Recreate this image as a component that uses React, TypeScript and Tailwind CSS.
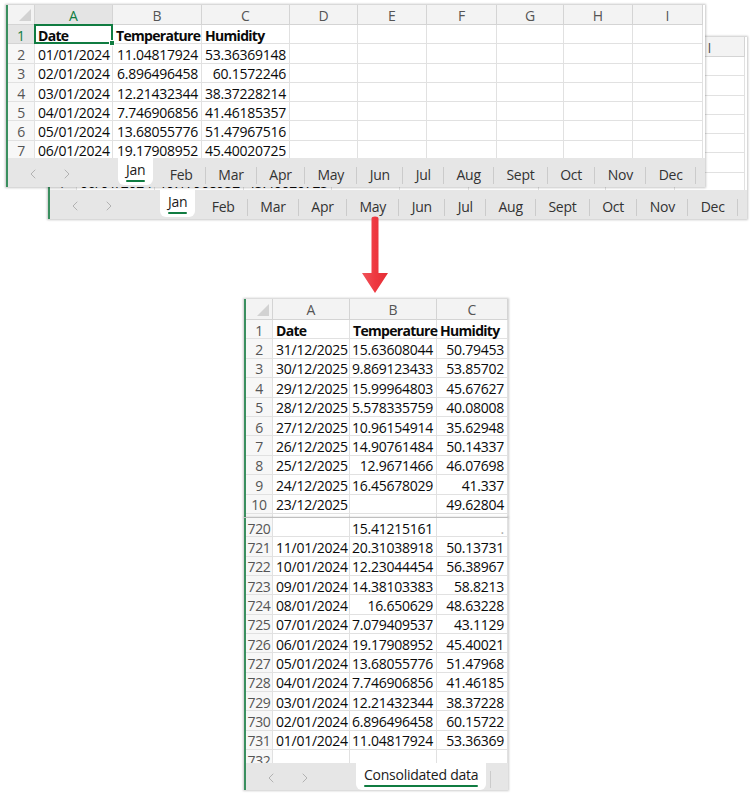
import React from "react";
import { ChevronLeft, ChevronRight } from "lucide-react";

type Row = { num: string; cells: string[]; bold?: boolean };

const monthRows: Row[] = [
  { num: "1", cells: ["Date", "Temperature", "Humidity"], bold: true },
  { num: "2", cells: ["01/01/2024", "11.04817924", "53.36369148"] },
  { num: "3", cells: ["02/01/2024", "6.896496458", "60.1572246"] },
  { num: "4", cells: ["03/01/2024", "12.21432344", "38.37228214"] },
  { num: "5", cells: ["04/01/2024", "7.746906856", "41.46185357"] },
  { num: "6", cells: ["05/01/2024", "13.68055776", "51.47967516"] },
  { num: "7", cells: ["06/01/2024", "19.17908952", "45.40020725"] },
  { num: "8", cells: ["", "", ""] },
];

const consTop: Row[] = [
  { num: "1", cells: ["Date", "Temperature", "Humidity"], bold: true },
  { num: "2", cells: ["31/12/2025", "15.63608044", "50.79453"] },
  { num: "3", cells: ["30/12/2025", "9.869123433", "53.85702"] },
  { num: "4", cells: ["29/12/2025", "15.99964803", "45.67627"] },
  { num: "5", cells: ["28/12/2025", "5.578335759", "40.08008"] },
  { num: "6", cells: ["27/12/2025", "10.96154914", "35.62948"] },
  { num: "7", cells: ["26/12/2025", "14.90761484", "50.14337"] },
  { num: "8", cells: ["25/12/2025", "12.9671466", "46.07698"] },
  { num: "9", cells: ["24/12/2025", "16.45678029", "41.337"] },
  { num: "10", cells: ["23/12/2025", "", "49.62804"] },
  { num: "11", cells: ["", "", ""] },
];

const consBottom: Row[] = [
  { num: "720", cells: ["", "15.41215161", "."] },
  { num: "721", cells: ["11/01/2024", "20.31038918", "50.13731"] },
  { num: "722", cells: ["10/01/2024", "12.23044454", "56.38967"] },
  { num: "723", cells: ["09/01/2024", "14.38103383", "58.8213"] },
  { num: "724", cells: ["08/01/2024", "16.650629", "48.63228"] },
  { num: "725", cells: ["07/01/2024", "7.079409537", "43.1129"] },
  { num: "726", cells: ["06/01/2024", "19.17908952", "45.40021"] },
  { num: "727", cells: ["05/01/2024", "13.68055776", "51.47968"] },
  { num: "728", cells: ["04/01/2024", "7.746906856", "41.46185"] },
  { num: "729", cells: ["03/01/2024", "12.21432344", "38.37228"] },
  { num: "730", cells: ["02/01/2024", "6.896496458", "60.15722"] },
  { num: "731", cells: ["01/01/2024", "11.04817924", "53.36369"] },
  { num: "732", cells: ["", "", ""] },
];

const months = ["Jan", "Feb", "Mar", "Apr", "May", "Jun", "Jul", "Aug", "Sept", "Oct", "Nov", "Dec"];

function Grid({
  gridClass,
  letters,
  rows,
  header,
  selected,
}: {
  gridClass: string;
  letters: string[];
  rows: Row[];
  header: boolean;
  selected?: boolean;
}) {
  return (
    <div className={gridClass}>
      {header && (
        <>
          <div className="relative border-b border-r border-[#d4d4d4] bg-[#f3f3f3]">
            <svg className="absolute bottom-[3px] right-[3px]" width="12" height="12" viewBox="0 0 12 12">
              <path d="M12 0V12H0Z" fill="#d2d2d2" />
            </svg>
          </div>
          {letters.map((l, i) => (
            <div
              key={l}
              className={
                selected && i === 0
                  ? "flex items-center justify-center border-b border-r border-[#d4d4d4] bg-[#e4e4e4] pt-[1px] text-[#107c41]"
                  : "flex items-center justify-center border-b border-r border-[#d4d4d4] bg-[#f3f3f3] pt-[1px] text-[#555]"
              }
            >
              {l}
            </div>
          ))}
        </>
      )}
      {rows.map((r) => (
        <React.Fragment key={r.num}>
          <div
            className={
              selected && r.num === "1"
                ? "flex items-center justify-center border-b border-r border-[#d4d4d4] bg-[#e4e4e4] pt-[2px] text-[#107c41]"
                : "flex items-center justify-center overflow-hidden border-b border-r border-[#e1e1e1] bg-[#f7f7f7] pt-[2px] tracking-[-0.3px] text-[#555]"
            }
          >
            {r.num}
          </div>
          {letters.map((l, ci) => {
            const v = r.cells[ci] ?? "";
            const right = !r.bold && ci > 0;
            const isSel = selected && r.num === "1" && ci === 0;
            return (
              <div
                key={l}
                className={
                  (right
                    ? "flex items-center justify-end pr-[3px] "
                    : "flex items-center justify-start pl-[3px] ") +
                  (r.bold ? "font-bold tracking-[-0.7px] " : "tracking-[-0.25px] ") +
                  (v === "." ? "text-[#aaa] " : "text-[#0a0a0a] ") +
                  "relative whitespace-nowrap border-b border-r border-[#e1e1e1] pt-[2px]"
                }
              >
                {v}
                {isSel && (
                  <div className="pointer-events-none absolute inset-[-1px] z-10 border-2 border-[#107c41]">
                    <div className="absolute bottom-[-4px] right-[-4px] h-[6px] w-[6px] border border-white bg-[#107c41]" />
                  </div>
                )}
              </div>
            );
          })}
        </React.Fragment>
      ))}
    </div>
  );
}

function TabBar({
  tabs,
  active,
  barClass,
  trailingSep,
}: {
  tabs: string[];
  active: number;
  barClass: string;
  trailingSep?: boolean;
}) {
  return (
    <div className={barClass}>
      <div className="flex h-full w-[110px] shrink-0 items-center pt-[2px]">
        <ChevronLeft className="ml-[17px] h-[16px] w-[16px] text-[#a9a9a9]" strokeWidth={1.3} />
        <ChevronRight className="ml-[18px] h-[16px] w-[16px] text-[#a9a9a9]" strokeWidth={1.3} />
      </div>
      {tabs.map((t, i) =>
        i === active ? (
          <div key={t} className="flex h-[27px] shrink-0 items-center rounded-b-[6px] bg-white px-[8px]">
            <span className="relative pb-[3px] text-[14px] leading-[18px] tracking-[-0.25px] text-[#1a1a1a]">
              {t}
              <span className="absolute bottom-0 left-0 right-0 h-[2px] rounded-full bg-[#107c41]" />
            </span>
          </div>
        ) : (
          <div key={t} className={i === active + 1 ? "ml-[4px] flex h-full shrink-0 items-center pt-[5px]" : "flex h-full shrink-0 items-center pt-[5px]"}>
            <span className="px-[12.35px] text-[14px] leading-[18px] tracking-[-0.25px] text-[#333]">{t}</span>
            <span className="h-[17px] w-px bg-[#cbcbcb]" />
          </div>
        )
      )}
      {trailingSep && (
        <div className="ml-[4px] flex h-full shrink-0 items-center pt-[5px]">
          <span className="h-[17px] w-px bg-[#cbcbcb]" />
        </div>
      )}
    </div>
  );
}

function MonthSheet({ pos, selected }: { pos: string; selected?: boolean }) {
  return (
    <div className={pos}>
      <div className="h-[153px] shrink-0 overflow-hidden bg-white">
        <Grid
          gridClass="grid w-[695px] grid-cols-[27px_78px_89px_88px_68px_69px_70px_67px_69px_70px] grid-rows-[20px] auto-rows-[19.3px]"
          letters={["A", "B", "C", "D", "E", "F", "G", "H", "I"]}
          rows={monthRows}
          header
          selected={selected}
        />
      </div>
      <TabBar
        tabs={months}
        active={0}
        barClass="flex h-[29px] shrink-0 items-start overflow-hidden bg-[#e6e6e6]"
      />
    </div>
  );
}

export default function App() {
  return (
    <div className="relative h-[812px] w-[750px] overflow-hidden bg-white font-['Open_Sans',sans-serif] text-[14px]">
      {/* back sheet */}
      <MonthSheet pos="absolute left-[48px] top-[37px] z-0 flex h-[182px] w-[699px] flex-col border-l-[2px] border-[#3a8f5f] bg-white shadow-[0_0_2px_1px_rgba(0,0,0,0.22)]" />
      {/* front sheet */}
      <MonthSheet
        pos="absolute left-[6px] top-[5px] z-10 flex h-[182px] w-[699px] flex-col border-l-[2px] border-[#3a8f5f] bg-white shadow-[0_0_2px_1px_rgba(0,0,0,0.22)]"
        selected
      />

      {/* red arrow */}
      <svg className="absolute left-[361px] top-[215px]" width="28" height="80" viewBox="0 0 28 80">
        <defs>
          <linearGradient id="arr" x1="0" x2="1" y1="0" y2="0">
            <stop offset="0" stopColor="#f0545b" />
            <stop offset="0.5" stopColor="#ee3840" />
            <stop offset="1" stopColor="#e42e36" />
          </linearGradient>
        </defs>
        <path d="M10.5 3.5Q10.5 1.5 14 1.5Q17.5 1.5 17.5 3.5V58H27L14 78L1 58H10.5Z" fill="url(#arr)" />
      </svg>

      {/* consolidated: top piece */}
      <div className="absolute left-[244px] top-[299px] h-[218px] w-[264px] overflow-hidden border-l-[2px] border-[#3a8f5f] bg-white shadow-[0_0_2px_1px_rgba(0,0,0,0.2)]">
        <Grid
          gridClass="grid w-[262px] grid-cols-[27px_77px_87px_71px] grid-rows-[21px] auto-rows-[19.4px]"
          letters={["A", "B", "C"]}
          rows={consTop}
          header
        />
      </div>

      {/* consolidated: bottom piece */}
      <div className="absolute left-[244px] top-[518px] flex h-[272px] w-[264px] flex-col border-l-[2px] border-[#3a8f5f] bg-white shadow-[0_0_2px_1px_rgba(0,0,0,0.2)]">
        <div className="h-[245px] shrink-0 overflow-hidden">
          <Grid
            gridClass="grid w-[262px] grid-cols-[27px_77px_87px_71px] auto-rows-[19.35px]"
            letters={["A", "B", "C"]}
            rows={consBottom}
            header={false}
          />
        </div>
        <TabBar
          tabs={["Consolidated data"]}
          active={0}
          trailingSep
          barClass="flex h-[27px] shrink-0 items-start overflow-hidden bg-[#e6e6e6]"
        />
      </div>
    </div>
  );
}
